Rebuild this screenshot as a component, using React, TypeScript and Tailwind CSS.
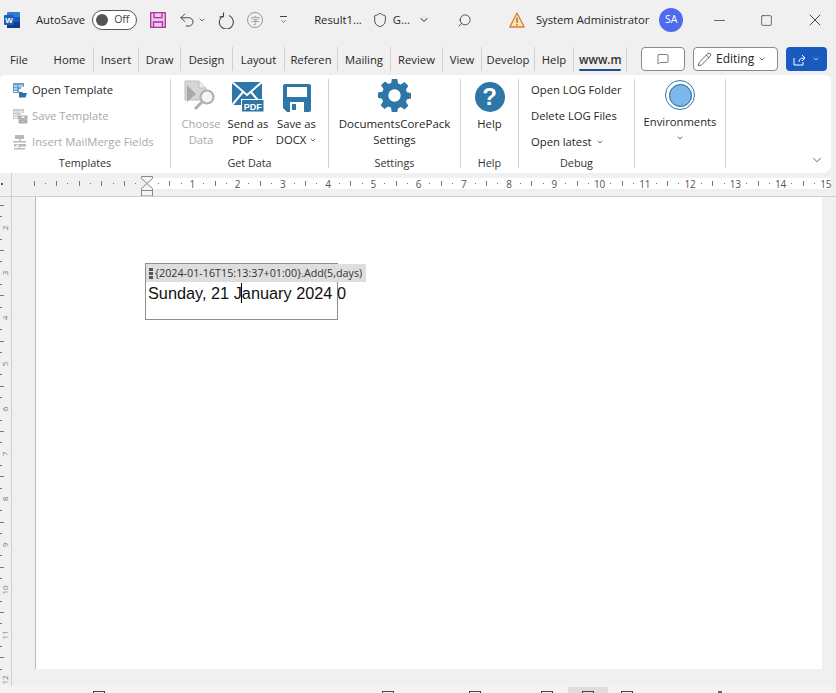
import { ChevronDown, Minus, Search, Shield, Square, X, Pencil, MessageSquare, Undo2 } from 'lucide-react'

const font = { fontFamily: '"Open Sans", "Noto Sans", sans-serif' }

function Chev({ className = 'w-[9px] h-[9px]' }: { className?: string }) {
    return <ChevronDown className={className} strokeWidth={2} />
}

function WordLogo() {
    return (
        <svg width="16" height="16" viewBox="0 0 16 16">
            <rect x="3" y="0" width="13" height="16" rx="1" fill="#2b7cd3" />
            <rect x="3" y="5" width="13" height="5" fill="#185abd" />
            <rect x="3" y="10" width="13" height="6" fill="#103f91" />
            <rect x="0" y="3" width="10" height="10" rx="1" fill="#1a5fb4" />
            <text x="5" y="11" textAnchor="middle" fontSize="8" fontWeight="700" fill="#fff" fontFamily="Liberation Sans">W</text>
        </svg>
    )
}

function PurpleSave() {
    return (
        <svg width="16" height="16" viewBox="0 0 16 16" fill="#f3c6ef" stroke="#a4359c" strokeWidth="1.3">
            <path d="M.7.7h14.6v14.6H.7z" />
            <path d="M4 .7v5h8v-5M3.500 15.300V10h9v5.300" fill="none" />
        </svg>
    )
}

function RedoIcon() {
    return (
        <svg width="16" height="17" viewBox="0 0 16 17" fill="none" stroke="#444" strokeWidth="1.100">
            <path d="M4.500 4.200A7 7 0 1 0 11 3.600" />
            <path d="M5.500 .5v4.300H1.500" />
        </svg>
    )
}

function OpenTemplateIcon({ gray }: { gray?: boolean }) {
    const c = gray ? '#b9b9b9' : '#3f7fb5'
    return (
        <svg width="16" height="16" viewBox="0 0 16 16">
            <path d="M1 1h11v4H9v2H7v4H1z" fill={c} opacity="0.75" />
            <path d="M2 4h3M6.500 4H11M2 7h3M2 9.500h3" stroke="#fff" strokeWidth="1" />
            {gray ? (
                <path d="M7 8h8v7H7zM9 8v2.500h4V8M9 15v-3h4v3" fill="#c4c4c4" stroke="#9a9a9a" strokeWidth=".8" />
            ) : (
                <path d="M7 10h3l1 1h4l-1.500 4.500H7z" fill="#2b72ab" />
            )}
        </svg>
    )
}

function FieldsIcon() {
    return (
        <svg width="16" height="16" viewBox="0 0 16 16" fill="#b9b9b9">
            <path d="M3 1h9v4H3zM7 5h1.500v2H7zM1 7h13v1.500H1zM2 10h12v2.500H2zM7 12h1v2H7zM2 14h11v1.500H2z" />
            <path d="M4 10.800h3v1H4z" fill="#fff" />
        </svg>
    )
}

function ChooseDataIcon() {
    return (
        <svg width="34" height="32" viewBox="0 0 34 32">
            <path d="M1 1h14l7 7v12H1z" fill="#d6d6d6" stroke="#bdbdbd" strokeWidth="1" />
            <path d="M15 1v7h7" fill="#eeeeee" stroke="#bdbdbd" strokeWidth="1" />
            <path d="M3 5l9 9-9 8z" fill="#a9a9a9" />
            <circle cx="23" cy="17" r="6.500" fill="#f4f4f4" stroke="#b0b0b0" strokeWidth="2.200" />
            <path d="M18 22l-7 7" stroke="#b0b0b0" strokeWidth="3" />
        </svg>
    )
}

function PdfIcon() {
    return (
        <svg width="32" height="30" viewBox="0 0 32 30">
            <path d="M0 0h30v23H0z" fill="#2e75a8" />
            <path d="M0 0l15 13L30 0M0 23l11-13M30 23L19 10" stroke="#fff" strokeWidth="2" fill="none" />
            <rect x="9.500" y="17.500" width="22.500" height="12.500" fill="#2e75a8" stroke="#fff" strokeWidth="1" />
            <text x="20.800" y="27.500" textAnchor="middle" fontSize="9" fontWeight="700" fill="#fff" fontFamily="Liberation Sans">PDF</text>
        </svg>
    )
}

function FloppyIcon() {
    return (
        <svg width="28" height="28" viewBox="0 0 28 28">
            <path d="M2 0h24a2 2 0 0 1 2 2v24a2 2 0 0 1-2 2H4l-4-4V2a2 2 0 0 1 2-2z" fill="#2e75a8" />
            <rect x="4" y="3" width="20" height="10" fill="#fff" />
            <rect x="7" y="18" width="14" height="10" fill="#fff" />
            <rect x="9" y="20" width="4" height="6" fill="#2e75a8" />
        </svg>
    )
}

function GearIcon() {
    return (
        <svg width="33" height="33" viewBox="0 0 24 24" fill="#2e75a8">
            <path fillRule="evenodd" d="M10 0h4l.6 3.200 2 .8L19.300 2.200l2.800 2.800-1.800 2.700.8 2 3.200.6v3.800l-3.200.6-.8 2 1.800 2.700-2.800 2.800-2.700-1.800-2 .8L14 24h-4l-.6-3.200-2-.8-2.700 1.800-2.800-2.800 1.800-2.700-.8-2L0 13.700V9.900l3.200-.6.800-2-1.800-2.700L5 1.800l2.700 1.800 2-.8zM12 7.500a4.500 4.500 0 1 0 0 9 4.500 4.500 0 0 0 0-9z" />
        </svg>
    )
}

function HelpIcon() {
    return (
        <div className="w-[30px] h-[30px] rounded-full bg-[#2e75a8] flex items-center justify-center text-white text-[24px] font-bold leading-none" style={{ fontFamily: '"Liberation Sans", sans-serif' }}>?</div>
    )
}

function EnvIcon() {
    return (
        <div className="w-[30px] h-[30px] rounded-full border-[1.5px] border-[#2e75a8] flex items-center justify-center">
            <div className="w-[23px] h-[23px] rounded-full bg-[#7db8ec] border-[1.5px] border-[#1f5f96]" />
        </div>
    )
}

function Sep() {
    return <div className="w-px self-stretch bg-[#d2d2d2] mt-[1px] mb-[5px] shrink-0" />
}

function Group({ label, width, children }: { label: string; width: string; children: React.ReactNode }) {
    return (
        <div className={`flex flex-col ${width} shrink-0`}>
            <div className="flex-1 flex min-h-0">{children}</div>
            <div className="h-[20px] text-center text-[10.800px] leading-[20px] text-[#333]">{label}</div>
        </div>
    )
}

function SmallRow({ icon, text, disabled, chev }: { icon?: React.ReactNode; text: string; disabled?: boolean; chev?: boolean }) {
    return (
        <div className={`flex items-center gap-[4px] h-[26px] shrink-0 whitespace-nowrap ${disabled ? 'text-[#a8a8a8]' : 'text-[#262626]'}`}>
            {icon}
            <span>{text}</span>
            {chev && <Chev className="w-[8px] h-[8px]" />}
        </div>
    )
}

function BigButton({ icon, lines, disabled, chev, iconH = 'h-[34px]' }: { icon: React.ReactNode; lines: string[]; disabled?: boolean; chev?: boolean; iconH?: string }) {
    return (
        <div className={`flex flex-col items-center w-full leading-[16px] whitespace-nowrap ${disabled ? 'text-[#a8a8a8]' : 'text-[#262626]'}`}>
            <div className={`${iconH} flex items-end justify-center shrink-0`}>{icon}</div>
            <div className="mt-[4px] text-center">
                {lines.map((l, i) => (
                    <div key={i} className="flex items-center justify-center gap-[3px] h-[16px]">
                        {l}
                        {chev && i === lines.length - 1 && <Chev className="w-[8px] h-[8px]" />}
                    </div>
                ))}
            </div>
        </div>
    )
}

const QUARTER = 11.32

function HorizontalRuler() {
    const cells = []
    for (let i = -10; i <= 60; i++) {
        const q = ((i % 4) + 4) % 4
        cells.push(
            <div key={i} className={`h-[11px] shrink-0 flex items-center ${i >= 0 ? 'bg-white' : ''}`} style={{ width: i === 60 ? 5 : QUARTER }}>
                <div className="w-0 flex justify-center overflow-visible">
                    {i > 0 && q === 0 ? (
                        <span className="text-[10px] leading-none text-[#555]">{i / 4}</span>
                    ) : q === 2 || (i < 0 && i % 2 === 0) ? (
                        <div className="w-px h-[5px] bg-[#777] shrink-0" />
                    ) : i === 0 ? null : (
                        <div className="w-px h-px bg-[#777] shrink-0" />
                    )}
                </div>
            </div>
        )
    }
    return (
        <div className="h-[24px] flex bg-[#f0f0f0] border-b border-[#d0d0d0] shrink-0 overflow-hidden">
            <div className="w-[11px] shrink-0 flex items-center pb-[2px]">
                <div className="w-[2px] h-[2px] bg-[#555] ml-[1px]" />
            </div>
            <div className="w-px bg-[#cfcfcf] shrink-0" />
            <div className="relative flex items-center pl-[22px] pb-[2px]">
                {cells}
                {/* indent markers */}
                <svg className="absolute left-[129px] top-[3px]" width="12" height="21" viewBox="0 0 12 21" fill="#f5f5f5" stroke="#888">
                    <path d="M.5.5h11v2l-5.500 5-5.500-5zM.5 12.500l5.500-5 5.500 5v2H.5z" />
                    <path d="M.5 14.500h11v5.500H.5z" />
                </svg>
            </div>
        </div>
    )
}

function VerticalRuler() {
    const cells = []
    for (let i = 0; i < 46; i++) {
        const q = i % 4
        const n = Math.floor(i / 4) + 1
        cells.push(
            <div key={i} className="h-[11.320px] shrink-0 flex items-center overflow-visible">
                {i === 0 ? null : q === 0 ? (
                    <span className="-rotate-90 text-[8px] leading-none text-[#777] w-[9px] text-center">{n}</span>
                ) : q === 2 ? (
                    <div className="w-[4px] h-px bg-[#777]" />
                ) : (
                    <div className="w-[2px] h-px bg-[#777]" />
                )}
            </div>
        )
    }
    return (
        <div className="w-[35px] shrink-0 flex bg-[#f0f0f0] overflow-hidden">
            <div className="w-[11px] shrink-0 flex flex-col -mt-[20px]">{cells}</div>
            <div className="w-px bg-[#d0d0d0] shrink-0" />
        </div>
    )
}

function Page() {
    return (
        <div className="flex-1 min-w-0 flex flex-col bg-[#f0f0f0] overflow-hidden">
            <div className="h-[472px] mr-[14px] bg-white border-l border-[#bbb] shrink-0 pl-[109px] pt-[66px]">
                <div className="relative w-[193px] h-[57px] border border-[#8e8e8e]" style={{ fontFamily: '"Liberation Sans", sans-serif' }}>
                    <div className="absolute top-0 left-0 h-[18px] w-[220px] bg-[#dedede] flex items-center pl-[3px] gap-[2px] text-[#333] text-[10.750px] whitespace-nowrap" style={font}>
                        <div className="flex flex-col gap-px w-[4px] shrink-0">
                            <div className="h-[3px] bg-[#555]" />
                            <div className="h-[3px] bg-[#555]" />
                            <div className="h-[3px] bg-[#555]" />
                        </div>
                        <span>{'{2024-01-16T15:13:37+01:00}.Add(5,days)'}</span>
                    </div>
                    <div className="pt-[19px] pl-[2px] text-[16.300px] leading-[20px] text-[#111] whitespace-nowrap relative">
                        Sunday, 21 J<span className="inline-block w-px h-[20px] bg-black align-top -ml-[1px]" />anuary 2024 0
                    </div>
                </div>
            </div>
        </div>
    )
}

function StatusBar() {
    const box = 'w-[12px] h-[10px] border-t-[1.5px] border-x border-[#444] shrink-0'
    return (
        <div className="h-[7px] bg-[#f3f3f3] flex shrink-0 overflow-hidden">
            <div className={`${box} ml-[93px] mt-[5px]`} />
            <div className={`${box} ml-[277px] mt-[5px]`} />
            <div className={`${box} ml-[75px] mt-[5px]`} />
            <div className={`${box} ml-[60px] mt-[5px]`} />
            <div className="w-[40px] ml-[15px] mt-[1px] bg-[#dedede] flex justify-center pt-[4px]">
                <div className={box} />
            </div>
            <div className={`${box} ml-[13px] mt-[5px]`} />
            <div className="w-[4px] h-[2px] bg-[#666] ml-[85px] mt-[5px]" />
        </div>
    )
}

const tabs = [
    ['Home', 'w-[48px]'],
    ['Insert', 'w-[45px]'],
    ['Draw', 'w-[42px]'],
    ['Design', 'w-[52px]'],
    ['Layout', 'w-[52px]'],
    ['Referen', 'w-[53px]'],
    ['Mailing', 'w-[53px]'],
    ['Review', 'w-[52px]'],
    ['View', 'w-[39px]'],
    ['Develop', 'w-[53px]'],
    ['Help', 'w-[39px]'],
]

export default function App() {
    return (
        <div className="w-[836px] h-[693px] flex flex-col overflow-hidden bg-[#f0f0f0] text-[11.250px] text-[#262626]" style={font}>
            {/* title bar */}
            <div className="h-[40px] flex items-center shrink-0 pl-[4px]">
                <WordLogo />
                <span className="ml-[16px]">AutoSave</span>
                <div className="ml-[7px] w-[45px] h-[20px] rounded-full border border-[#555] flex items-center pl-[3px] gap-[6px] bg-white shrink-0">
                    <div className="w-[12px] h-[12px] rounded-full bg-[#555]" />
                    <span className="text-[10.500px] text-[#444]">Off</span>
                </div>
                <div className="ml-[13px]"><PurpleSave /></div>
                <Undo2 className="ml-[12px] w-[18px] h-[18px]" strokeWidth={1.100} />
                <Chev className="ml-[2px] w-[8px] h-[8px]" />
                <div className="ml-[12px]"><RedoIcon /></div>
                <div className="ml-[13px] w-[16px] h-[16px] rounded-full border border-[#999] flex items-center justify-center text-[9px] leading-none text-[#999]" style={{ fontFamily: '"Noto Sans CJK SC", sans-serif' }}>字</div>
                <div className="ml-[15px] w-[10px] flex flex-col items-center gap-[1px]">
                    <div className="w-[7px] h-px bg-[#444]" />
                    <ChevronDown className="w-[7px] h-[7px]" />
                </div>
                <span className="ml-[26px]">Result1...</span>
                <Shield className="ml-[10px] w-[16px] h-[16px]" strokeWidth={1.200} />
                <span className="ml-[5px]">G...</span>
                <Chev className="ml-[8px] w-[12px] h-[12px]" />
                <Search className="ml-[27px] w-[15px] h-[15px] -scale-x-100" strokeWidth={1.200} />
                <svg className="ml-[37px]" width="16" height="16" viewBox="0 0 16 16">
                    <path d="M8 1l7.200 14H.8z" fill="#fbe3bd" stroke="#d1822c" strokeWidth="1.300" strokeLinejoin="round" />
                    <path d="M7.300 5.500h1.400v5.500H7.300zM7.300 12h1.400v1.500H7.300z" fill="#b5651d" />
                </svg>
                <span className="ml-[11px] whitespace-nowrap">System Administrator</span>
                <div className="ml-[10px] w-[24px] h-[24px] rounded-full bg-[#4f6bed] text-white text-[10.500px] flex items-center justify-center shrink-0">SA</div>
                <Minus className="ml-[28px] w-[17px] h-[17px]" strokeWidth={1} />
                <Square className="ml-[32px] w-[13px] h-[13px]" strokeWidth={1.200} />
                <X className="ml-[32px] w-[20px] h-[20px]" strokeWidth={1} />
            </div>

            {/* tabs */}
            <div className="h-[35px] flex items-start shrink-0 pl-[10px] pt-[7px]">
                <div className="w-[36px] h-[24px] pt-[2px] flex items-center">File</div>
                {tabs.map(([t, w]) => (
                    <div key={t} className={`${w} h-[24px] pt-[2px] overflow-hidden flex items-center justify-center whitespace-nowrap border-r border-[#d0d0d0]`}>
                        {t}
                    </div>
                ))}
                <div className="w-[53px] h-[24px] px-[5px] border-r border-[#d0d0d0] overflow-hidden">
                    <div className="h-[22px] pt-[4px] flex items-center font-semibold whitespace-nowrap text-[#333] text-[11.600px]">www.m</div>
                    <div className="h-[2px] bg-[#1f4f8f] rounded-full" />
                </div>
                <div className="ml-[14px] w-[44px] h-[24px] bg-white border border-[#8a8a8a] rounded-[4px] flex items-center justify-center">
                    <MessageSquare className="w-[12px] h-[12px]" strokeWidth={1.200} />
                </div>
                <div className="ml-[8px] w-[85px] h-[24px] bg-white border border-[#8a8a8a] rounded-[4px] flex items-center pl-[3px] gap-[4px] text-[12px]">
                    <Pencil className="w-[15px] h-[15px]" strokeWidth={1.100} />
                    <span>Editing</span>
                    <Chev className="w-[8px] h-[8px]" />
                </div>
                <div className="ml-[8px] w-[41px] h-[24px] bg-[#185abd] rounded-[4px] flex items-center justify-center gap-[6px] text-white">
                    <svg width="13" height="13" viewBox="0 0 13 13" fill="none" stroke="#fff" strokeWidth="1">
                        <path d="M1 5v7h9V9M6 9c0-3 2-4 5-4M9 2l3 3-3 3" />
                    </svg>
                    <Chev className="w-[8px] h-[8px]" />
                </div>
            </div>

            {/* ribbon */}
            <div className="h-[98px] w-[831px] shrink-0 bg-white rounded-t-[5px] rounded-br-[8px] flex pt-[3px] relative">
                <Group label="Templates" width="w-[170px]">
                    <div className="flex flex-col pl-[12px] -mt-[1px]">
                        <SmallRow icon={<OpenTemplateIcon />} text="Open Template" />
                        <SmallRow icon={<OpenTemplateIcon gray />} text="Save Template" disabled />
                        <SmallRow icon={<FieldsIcon />} text="Insert MailMerge Fields" disabled />
                    </div>
                </Group>
                <Sep />
                <Group label="Get Data" width="w-[157px]">
                    <div className="w-[60px]"><BigButton icon={<ChooseDataIcon />} lines={['Choose', 'Data']} disabled /></div>
                    <div className="w-[34px]"><BigButton icon={<PdfIcon />} lines={['Send as', 'PDF']} chev /></div>
                    <div className="w-[63px]"><BigButton icon={<FloppyIcon />} lines={['Save as', 'DOCX']} chev /></div>
                </Group>
                <Sep />
                <Group label="Settings" width="w-[131px]">
                    <div className="w-full text-[11.500px]"><BigButton icon={<GearIcon />} lines={['DocumentsCorePack', 'Settings']} /></div>
                </Group>
                <Sep />
                <Group label="Help" width="w-[57px]">
                    <BigButton icon={<HelpIcon />} lines={['Help']} />
                </Group>
                <Sep />
                <Group label="Debug" width="w-[115px]">
                    <div className="flex flex-col pl-[12px] -mt-[1px]">
                        <SmallRow text="Open LOG Folder" />
                        <SmallRow text="Delete LOG Files" />
                        <SmallRow text="Open latest" chev />
                    </div>
                </Group>
                <Sep />
                <Group label="" width="w-[90px]">
                    <BigButton icon={<EnvIcon />} lines={['Environments', '']} iconH="h-[32px]" chev />
                </Group>
                <Sep />
                <ChevronDown className="absolute right-[7px] bottom-[6px] w-[14px] h-[14px]" strokeWidth={1.200} />
            </div>

            <HorizontalRuler />
            <div className="flex-1 min-h-0 flex">
                <VerticalRuler />
                <Page />
            </div>
            <StatusBar />
        </div>
    )
}
